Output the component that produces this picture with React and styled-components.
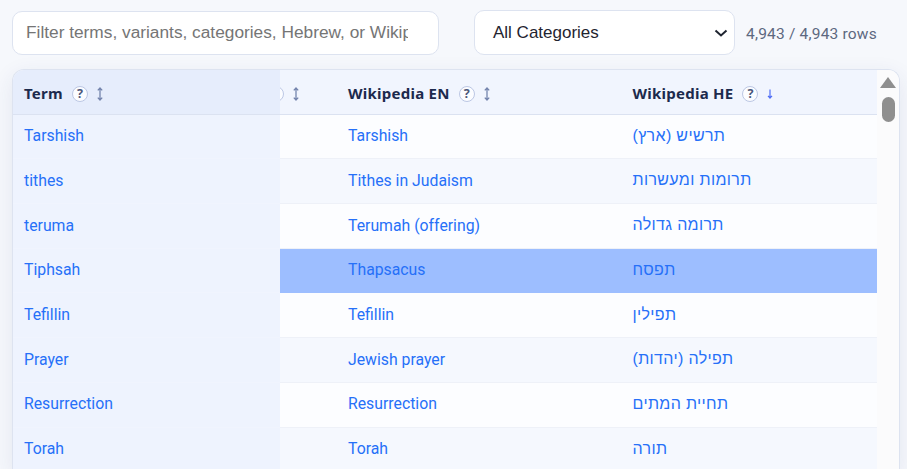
import React from "react";
import styled, { createGlobalStyle } from "styled-components";

const GlobalStyle = createGlobalStyle`
  html, body {
    margin: 0;
    height: 100%;
    overflow: hidden;
    background: #f6f8fc;
  }
  body {
    font-family: Roboto, "Noto Sans", sans-serif;
  }
`;

const Page = styled.div`
  height: 469px;
  overflow: hidden;
  padding: 10px 7px 0 12px;
  box-sizing: border-box;
`;

const Toolbar = styled.div`
  display: flex;
  align-items: center;
  height: 45px;
  margin-bottom: 14px;
`;

const FilterInput = styled.input`
  width: 427px;
  height: 44px;
  margin-right: 35px;
  padding: 0 30px 0 13px;
  box-sizing: border-box;
  border: 1px solid #dde3f0;
  border-radius: 10px;
  background: #fff;
  font: 17.3px "Liberation Sans", Arial, sans-serif;
  color: #222;
  &::placeholder {
    color: #757575;
    opacity: 1;
  }
`;

const CategorySelect = styled.div`
  display: flex;
  align-items: center;
  justify-content: space-between;
  width: 261px;
  height: 45px;
  margin-right: 11px;
  padding: 0 6px 0 18px;
  box-sizing: border-box;
  border: 1px solid #dde3f0;
  border-radius: 10px;
  background: #fff;
  font: 17px "Liberation Sans", Arial, sans-serif;
  color: #1f2430;
`;

const RowCount = styled.span`
  padding-top: 3px;
  font-size: 15.5px;
  letter-spacing: 0.2px;
  color: #5d6880;
`;

const TableFrame = styled.div`
  display: flex;
  border: 1px solid #dde3f0;
  border-bottom: 0;
  border-radius: 12px 12px 0 0;
  background: #fbfbfc;
  overflow: hidden;
  box-shadow: 0 6px 22px rgba(40, 60, 120, 0.09);
`;

const Table = styled.div`
  flex: 1;
  min-width: 0;
`;

const Row = styled.div`
  display: grid;
  grid-template-columns: 267px 57px 284.5px 1fr;
  height: 44.7px;
  box-sizing: border-box;
`;

const HeaderCell = styled.div`
  display: flex;
  align-items: center;
  justify-content: ${({ $clipped }) => ($clipped ? "flex-end" : "flex-start")};
  overflow: hidden;
  padding: ${({ $clipped }) => ($clipped ? "2px 37px 0 0" : "2px 0 0 11px")};
  box-sizing: border-box;
  background: ${({ $pinned }) => ($pinned ? "#e6edfc" : "#f1f5fe")};
  border-bottom: 1px solid #dbe2f1;
  font-family: "Noto Sans", sans-serif;
  font-size: 15px;
  font-weight: 700;
  letter-spacing: 0.25px;
  color: #1c2a4d;
  white-space: nowrap;
`;

const HelpBadge = styled.span`
  display: inline-flex;
  align-items: center;
  justify-content: center;
  flex: none;
  width: 16px;
  height: 16px;
  margin: 2px 0 0 9px;
  box-sizing: border-box;
  border: 1px solid #bcc7e4;
  border-radius: 50%;
  background: #fbfcff;
  font-size: 12.5px;
  font-weight: 700;
  letter-spacing: 0;
  color: #4a5678;
`;

const SortIcon = styled.svg`
  flex: none;
  width: 8px;
  height: 14px;
  margin: 2px 0 0 8px;
  color: ${({ $active }) => ($active ? "#4f6df5" : "#7484ad")};
`;

const BodyCell = styled.div`
  display: flex;
  align-items: center;
  padding: 0 0 1.5px 11px;
  box-sizing: border-box;
  background: ${({ $pinned, $selected, $even }) =>
    $pinned ? "#eef3fe" : $selected ? "#9dbeff" : $even ? "#f5f8fe" : "#fcfdff"};
  border-bottom: 1px solid
    ${({ $pinned, $selected }) => ($pinned ? "#f0f4fe" : $selected ? "transparent" : "#eef1f8")};
`;

const TermLink = styled.a`
  color: #2670f8;
  font-family: ${({ $hebrew }) => ($hebrew ? '"Liberation Sans", Arial, sans-serif' : "inherit")};
  font-size: ${({ $hebrew }) => ($hebrew ? "16px" : "15.8px")};
  letter-spacing: ${({ $hebrew }) => ($hebrew ? "0.35px" : "0")};
  text-decoration: none;
  white-space: nowrap;
`;

const Scrollbar = styled.div`
  display: flex;
  flex: none;
  flex-direction: column;
  align-items: center;
  width: 22px;
  padding-top: 7px;
  box-sizing: border-box;
  background: #fbfbfc;
`;

const ScrollArrow = styled.div`
  width: 0;
  height: 0;
  border-left: 8px solid transparent;
  border-right: 8px solid transparent;
  border-bottom: 11px solid #8f8f8f;
`;

const ScrollThumb = styled.div`
  width: 13px;
  height: 25px;
  margin-top: 9px;
  border-radius: 7px;
  background: #8f8f8f;
`;

const rows = [
  ["Tarshish", "Tarshish", "תרשיש (ארץ)"],
  ["tithes", "Tithes in Judaism", "תרומות ומעשרות"],
  ["teruma", "Terumah (offering)", "תרומה גדולה"],
  ["Tiphsah", "Thapsacus", "תפסח"],
  ["Tefillin", "Tefillin", "תפילין"],
  ["Prayer", "Jewish prayer", "תפילה (יהדות)"],
  ["Resurrection", "Resurrection", "תחיית המתים"],
  ["Torah", "Torah", "תורה"],
];

const Sort = () => (
  <SortIcon viewBox="0 0 8 14" fill="none" stroke="currentColor" strokeWidth="1.3">
    <path d="M4 1v12M1.8 3.4 4 1l2.2 2.4M1.8 10.6 4 13l2.2-2.4" />
  </SortIcon>
);

const SortDown = () => (
  <SortIcon $active viewBox="0 0 8 14" fill="none" stroke="currentColor" strokeWidth="1.2">
    <path d="M4 2.5v8.5M2 8.8 4 11l2-2.2" />
  </SortIcon>
);

const App = () => (
  <Page>
    <GlobalStyle />
    <Toolbar>
      <FilterInput placeholder="Filter terms, variants, categories, Hebrew, or Wikipedia" />
      <CategorySelect>
        All Categories
        <svg width="14" height="8" viewBox="0 0 14 8" fill="none" stroke="#1f2430" strokeWidth="2">
          <path d="M1.5 1.5 7 6.5l5.5-5" />
        </svg>
      </CategorySelect>
      <RowCount>4,943 / 4,943 rows</RowCount>
    </Toolbar>
    <TableFrame>
      <Table>
        <Row>
          <HeaderCell $pinned>
            Term
            <HelpBadge>?</HelpBadge>
            <Sort />
          </HeaderCell>
          <HeaderCell $clipped>
            <HelpBadge>?</HelpBadge>
            <Sort />
          </HeaderCell>
          <HeaderCell>
            Wikipedia EN
            <HelpBadge>?</HelpBadge>
            <Sort />
          </HeaderCell>
          <HeaderCell>
            Wikipedia HE
            <HelpBadge>?</HelpBadge>
            <SortDown />
          </HeaderCell>
        </Row>
        {rows.map(([term, en, he], i) => (
          <Row key={term}>
            <BodyCell $pinned>
              <TermLink href="#">{term}</TermLink>
            </BodyCell>
            <BodyCell $even={i % 2 === 1} $selected={i === 3} />
            <BodyCell $even={i % 2 === 1} $selected={i === 3}>
              <TermLink href="#">{en}</TermLink>
            </BodyCell>
            <BodyCell $even={i % 2 === 1} $selected={i === 3}>
              <TermLink href="#" dir="rtl" $hebrew>{he}</TermLink>
            </BodyCell>
          </Row>
        ))}
      </Table>
      <Scrollbar>
        <ScrollArrow />
        <ScrollThumb />
      </Scrollbar>
    </TableFrame>
  </Page>
);

export default App;
